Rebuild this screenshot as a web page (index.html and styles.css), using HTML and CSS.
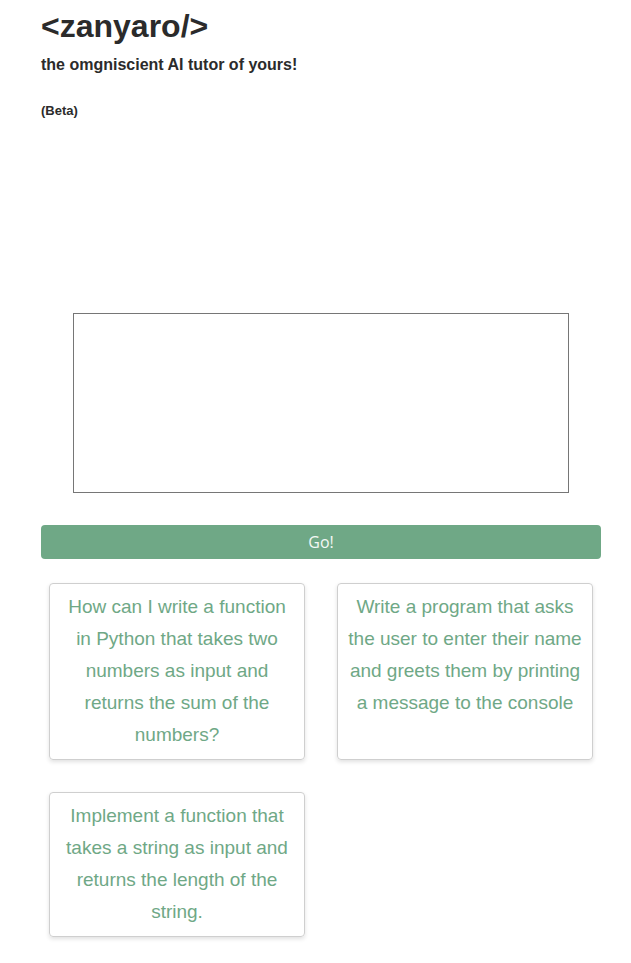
FILE: index.html
```html
<!DOCTYPE html>
<html>
<head>
<meta charset="utf-8">
<link rel="stylesheet" href="styles.css">
</head>
<body>
<main class="page">
  <h1 class="title">&lt;zanyaro/&gt;</h1>
  <p class="subtitle">the omgniscient AI tutor of yours!</p>
  <p class="beta">(Beta)</p>
  <div class="input-wrap">
    <textarea class="prompt"></textarea>
  </div>
  <button class="go">Go!</button>
  <div class="cards">
    <div class="card">How can I write a function in Python that takes two numbers as input and returns the sum of the numbers?</div>
    <div class="card">Write a program that asks the user to enter their name and greets them by printing a message to the console</div>
    <div class="card">Implement a function that takes a string as input and returns the length of the string.</div>
  </div>
</main>
</body>
</html>
```
FILE: styles.css
```css
html, body {
  margin: 0;
  padding: 0;
  background: #fff;
}
body {
  font-family: "Liberation Sans", Arial, sans-serif;
  color: #2b2b2b;
}
.page {
  width: 560px;
  padding: 8px 0 24px 41px;
}
.title {
  margin: 0;
  font-size: 32px;
  font-weight: bold;
  line-height: 37px;
}
.subtitle {
  margin: 11px 0 0;
  font-size: 16px;
  font-weight: bold;
  line-height: 18px;
}
.beta {
  margin: 29px 0 0;
  font-size: 13px;
  font-weight: bold;
  line-height: 15px;
}
.input-wrap {
  display: flex;
  justify-content: center;
  margin-top: 195px;
}
.prompt {
  width: 496px;
  height: 180px;
  box-sizing: border-box;
  border: 1px solid #767676;
  border-radius: 0;
  resize: none;
  margin: 0;
  padding: 2px;
  display: block;
}
.go {
  display: block;
  width: 560px;
  height: 34px;
  margin-top: 32px;
  border: none;
  border-radius: 4px;
  background: #6fa886;
  color: #f4f8f5;
  font-family: "Open Sans", "Noto Sans", sans-serif;
  font-size: 16px;
  padding: 0;
}
.cards {
  display: grid;
  grid-template-columns: 256px 256px;
  column-gap: 32px;
  row-gap: 32px;
  padding: 0 8px;
  margin-top: 24px;
}
.card {
  border: 1px solid #cfcfcf;
  border-radius: 4px;
  box-shadow: 0 2px 4px rgba(0, 0, 0, 0.12);
  padding: 7px 10px 8px;
  text-align: center;
  color: #6fa886;
  font-size: 19px;
  line-height: 32px;
}
```
